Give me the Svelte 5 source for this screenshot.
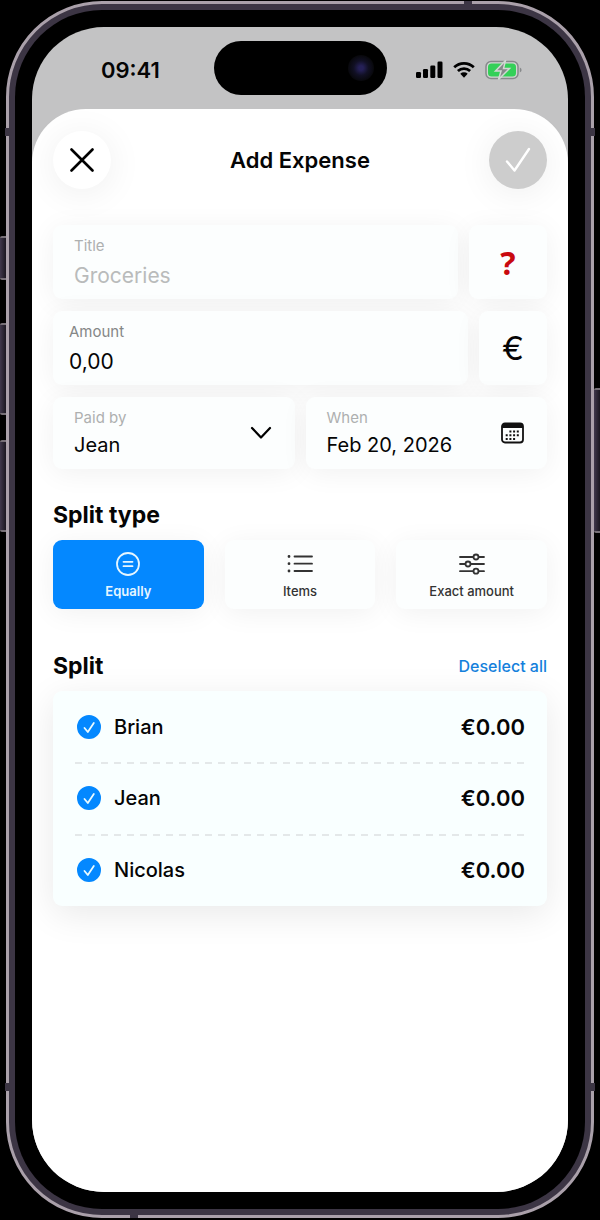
<script lang="ts">
  let title = $state("");
  let amount = $state("0,00");
  let paidBy = $state("Jean");
  let date = $state("Feb 20, 2026");
  let splitType = $state("equally");

  let people = $state([
    { name: "Brian", selected: true },
    { name: "Jean", selected: true },
    { name: "Nicolas", selected: true },
  ]);

  const splitTypes = [
    { id: "equally", label: "Equally" },
    { id: "items", label: "Items" },
    { id: "exact", label: "Exact amount" },
  ];

  let selectedCount = $derived(people.filter((p) => p.selected).length);
  let share = $derived(
    selectedCount ? (parseFloat(amount.replace(",", ".")) || 0) / selectedCount : 0
  );

  function toggleAll() {
    const next = selectedCount === 0;
    people.forEach((p) => (p.selected = next));
  }
</script>

<div class="stage">
  <div class="phone">
    <span class="side action"></span>
    <span class="side vol-up"></span>
    <span class="side vol-down"></span>
    <span class="side power"></span>
    <span class="band top"></span>
    <span class="band bottom"></span>
    <span class="band left upper"></span>
    <span class="band left lower"></span>
    <span class="band right upper"></span>
    <span class="band right lower"></span>

    <div class="bezel">
      <div class="screen">
        <div class="status">
          <span class="time">09:41</span>
          <div class="island"><span class="camera"></span></div>
          <div class="indicators">
            <svg width="27" height="18" viewBox="0 0 27 18">
              <rect x="0" y="11" width="5" height="6" rx="1.3" />
              <rect x="7" y="8" width="5" height="9" rx="1.3" />
              <rect x="14.3" y="4.5" width="5" height="12.5" rx="1.3" />
              <rect x="21.5" y="0.5" width="5" height="16.5" rx="1.3" />
            </svg>
            <svg width="22" height="18" viewBox="0 0 22 18">
              <g fill="none" stroke="#000" stroke-width="2.7">
                <path d="M1.2 6.3a14 14 0 0 1 19.600 0" />
                <path d="M4.900 10a8.800 8.800 0 0 1 12.200 0" />
              </g>
              <path d="M7.300 12.800a5.400 5.400 0 0 1 7.400 0L11 16.800z" />
            </svg>
            <svg width="37" height="20" viewBox="0 0 37 20">
              <rect x="1" y="1.5" width="32" height="17" rx="5" fill="#d2d7d3" stroke="#87898b" stroke-width="1.5" />
              <rect x="3" y="3.5" width="28" height="13" rx="3.5" fill="#34d058" />
              <path d="M34.800 7.500v5q1.800-.8 1.800-2.500t-1.800-2.500z" fill="#87898b" />
              <path d="M20.500 0.500 10.500 11h5.500l-2.500 8.500L24.500 8.500h-6z" fill="#87898b" stroke="#d2d7d3" stroke-width="1.5" />
            </svg>
          </div>
        </div>

        <main class="sheet">
          <header>
            <button class="round close" aria-label="Close">
              <svg width="24" height="24" viewBox="0 0 24 24">
                <path d="M1.500 1.500l21 21M22.500 1.500l-21 21" />
              </svg>
            </button>
            <h1>Add Expense</h1>
            <button class="round confirm" aria-label="Save">
              <svg width="26" height="26" viewBox="0 0 26 26">
                <path d="M2 14.500l7.500 9L24 2" />
              </svg>
            </button>
          </header>

          <form>
            <div class="row">
              <label class="field wide-pad">
                <span>Title</span>
                <input type="text" placeholder="Groceries" bind:value={title} />
              </label>
              <button type="button" class="tile category" aria-label="Category">?</button>
            </div>
            <div class="row">
              <label class="field dark-label">
                <span>Amount</span>
                <input type="text" inputmode="decimal" bind:value={amount} />
              </label>
              <button type="button" class="tile currency" aria-label="Currency">€</button>
            </div>
            <div class="row halves">
              <label class="field wide-pad">
                <span>Paid by</span>
                <select bind:value={paidBy}>
                  {#each people as person}
                    <option>{person.name}</option>
                  {/each}
                </select>
                <svg class="icon" width="22" height="14" viewBox="0 0 22 14">
                  <path d="M2 2l9 9.500L20 2" fill="none" stroke="#000" stroke-width="2.2" stroke-linecap="round" stroke-linejoin="round" />
                </svg>
              </label>
              <label class="field wide-pad">
                <span>When</span>
                <input type="text" bind:value={date} />
                <svg class="icon" width="23" height="22" viewBox="0 0 23 22">
                  <rect x="1" y="1.5" width="21" height="19" rx="3" fill="none" stroke="#111" stroke-width="1.8" />
                  <path d="M1 6V4a3 3 0 0 1 3-3h15a3 3 0 0 1 3 3v2z" fill="#111" />
                  <g fill="none" stroke="#111" stroke-width="2" stroke-dasharray="2 1.7">
                    <path d="M8.400 9.500h10" />
                    <path d="M4.700 13.200h14" />
                    <path d="M4.700 17h10" />
                  </g>
                </svg>
              </label>
            </div>
          </form>

          <h2 class="type-title">Split type</h2>
          <div class="types" role="radiogroup" aria-label="Split type">
            {#each splitTypes as type}
              <label class="type" class:active={splitType === type.id}>
                <input type="radio" name="split-type" value={type.id} bind:group={splitType} />
                <svg width="26" height="26" viewBox="0 0 26 26">
                  {#if type.id === "equally"}
                    <circle cx="13" cy="13" r="11" />
                    <path d="M8.500 10.800h9M8.500 15.200h9" />
                  {:else if type.id === "items"}
                    <path d="M7.500 5.500H25M7.500 12.700H25M7.500 20H25" />
                    <path d="M2 5.500h.01M2 12.700h.01M2 20h.01" stroke-width="2.8" />
                  {:else}
                    <path d="M1 6h13.300M19.700 6H25M1 13h5.300M11.700 13H25M1 20.200h13.300M19.700 20.200H25" />
                    <circle cx="17" cy="6" r="2.5" />
                    <circle cx="9" cy="13" r="2.5" />
                    <circle cx="17" cy="20.2" r="2.5" />
                  {/if}
                </svg>
                <span>{type.label}</span>
              </label>
            {/each}
          </div>

          <div class="split-head">
            <h2>Split</h2>
            <button class="link" onclick={toggleAll}>
              {selectedCount ? "Deselect all" : "Select all"}
            </button>
          </div>
          <ul>
            {#each people as person}
              <li>
                <label>
                  <span class="check">
                    <input type="checkbox" bind:checked={person.selected} />
                    <svg width="24" height="24" viewBox="0 0 24 24">
                      <path d="M7.500 13l3.300 4L16.800 8" />
                    </svg>
                  </span>
                  <span class="name">{person.name}</span>
                </label>
                <strong>€{(person.selected ? share : 0).toFixed(2)}</strong>
              </li>
            {/each}
          </ul>
        </main>
      </div>
    </div>
  </div>
</div>

<style>
  :global(body) {
    background: #000;
  }

  .stage {
    box-sizing: border-box;
    min-height: 100vh;
    padding: 1px 6px 2px;
    display: flex;
    font-family: Inter, "Liberation Sans", sans-serif;
    color: #050505;
  }

  .stage * {
    box-sizing: border-box;
  }

  .phone {
    position: relative;
    flex: 1;
    min-width: 0;
    display: flex;
    border: 3px solid #aaa0aa;
    border-radius: 96px;
    background: #3c3544;
  }

  .bezel {
    flex: 1;
    min-width: 0;
    display: flex;
    margin: 6px;
    padding: 17px;
    border-radius: 87px;
    background: #000;
  }

  .screen {
    flex: 1;
    min-width: 0;
    display: flex;
    flex-direction: column;
    overflow: hidden;
    border-radius: 72px;
    background: #c3c3c4;
  }

  /* hardware buttons and antenna bands */
  .side {
    position: absolute;
    left: -9px;
    width: 6px;
    border-radius: 2px 0 0 2px;
    border-top: 2px solid #777078;
    border-bottom: 2px solid #777078;
    background: linear-gradient(90deg, #40384c, #1b1720);
  }

  .action {
    top: 232px;
    height: 44px;
  }

  .vol-up {
    top: 319px;
    height: 92px;
  }

  .vol-down {
    top: 436px;
    height: 92px;
  }

  .power {
    left: auto;
    right: -9px;
    top: 384px;
    height: 145px;
  }

  .band {
    position: absolute;
    width: 8px;
    height: 8px;
    background: #3c3544;
  }

  .band.top {
    top: -3px;
    right: 119px;
  }

  .band.bottom {
    bottom: -3px;
    left: 121px;
  }

  .band.left {
    left: -4px;
  }

  .band.right {
    right: -4px;
  }

  .band.upper {
    top: 124px;
  }

  .band.lower {
    bottom: 124px;
  }

  .status {
    height: 82px;
    padding: 0 46px;
    display: grid;
    grid-template-columns: 1fr auto 1fr;
    align-items: center;
  }

  .time {
    padding: 4px 0 0 23px;
    font-size: 22px;
    font-weight: 600;
  }

  .island {
    width: 173px;
    height: 54px;
    padding-right: 13px;
    display: flex;
    align-items: center;
    justify-content: flex-end;
    border-radius: 27px;
    background: #000;
  }

  .camera {
    width: 26px;
    height: 26px;
    border-radius: 50%;
    background: radial-gradient(circle, #252057 0 12%, #111024 40%, #08080c 70%);
  }

  .indicators {
    padding-top: 4px;
    display: flex;
    align-items: center;
    justify-content: flex-end;
    gap: 10px;
  }

  .sheet {
    flex: 1;
    padding: 22px 21px 40px;
    border-radius: 54px 54px 0 0;
    background: #fff;
  }

  header {
    display: flex;
    align-items: center;
    justify-content: space-between;
  }

  h1,
  h2 {
    margin: 0;
    font-weight: 600;
  }

  h1 {
    font-size: 22px;
    line-height: 28px;
  }

  h2 {
    font-size: 23px;
    font-weight: 700;
    line-height: 28px;
  }

  button,
  input,
  select {
    margin: 0;
    padding: 0;
    border: 0;
    background: none;
    font-family: inherit;
    color: inherit;
  }

  .round {
    width: 58px;
    height: 58px;
    display: flex;
    align-items: center;
    justify-content: center;
    border-radius: 50%;
    background: #fff;
    box-shadow: 0 4px 36px rgba(0, 0, 0, 0.07);
  }

  .round path {
    fill: none;
    stroke: #000;
    stroke-width: 2.6;
    stroke-linecap: round;
    stroke-linejoin: round;
  }

  .round.confirm {
    background: #cdcdcd;
  }

  .confirm path {
    stroke: #fff;
    stroke-width: 2.4;
  }

  form {
    margin-top: 36px;
    display: flex;
    flex-direction: column;
    gap: 12px;
  }

  .row {
    display: flex;
    gap: 11px;
  }

  .field,
  .tile,
  .type,
  ul {
    border-radius: 9px;
    background: #fcfefe;
    box-shadow: 0 4px 28px rgba(0, 0, 0, 0.06);
  }

  .field {
    flex: 1;
    min-width: 0;
    height: 74px;
    padding: 8px 16px;
    display: grid;
    grid-template-columns: 1fr;
    grid-template-rows: 24px 36px;
    align-items: center;
  }

  .field.wide-pad {
    padding: 8px 23px 8px 21px;
  }

  .halves .field {
    height: 72px;
    grid-template-rows: 24px 32px;
  }

  .field span {
    grid-row: 1;
    grid-column: 1;
    font-size: 15px;
    color: #aeb0b0;
  }

  .field.dark-label span {
    color: #858787;
  }

  .field input,
  .field select {
    grid-row: 2;
    grid-column: 1;
    width: 100%;
    height: 32px;
    font-size: 21px;
    outline: none;
    appearance: none;
  }

  .halves input,
  .halves select {
    font-size: 20px;
  }

  .field input::placeholder {
    color: #b9bbbb;
    opacity: 1;
  }

  .icon {
    grid-row: 1 / 3;
    grid-column: 1;
    justify-self: end;
    pointer-events: none;
  }

  .tile {
    width: 68px;
    font-size: 33px;
    font-weight: 400;
  }

  .tile.category {
    width: 78px;
    font-family: "Noto Sans", "Open Sans", sans-serif;
    font-size: 32px;
    font-weight: 700;
    color: #c9090f;
  }

  .type-title {
    margin-top: 32px;
  }

  .types {
    margin-top: 11px;
    display: grid;
    grid-template-columns: repeat(3, 1fr);
    gap: 21px;
  }

  .type {
    position: relative;
    height: 69px;
    padding-top: 11px;
    display: flex;
    flex-direction: column;
    align-items: center;
    gap: 4px;
    font-size: 13px;
    font-weight: 500;
    line-height: 20px;
    color: #333;
    cursor: pointer;
  }

  .type input {
    position: absolute;
    opacity: 0;
  }

  .type svg {
    fill: none;
    stroke: #333;
    stroke-width: 1.8;
    stroke-linecap: round;
  }

  .type.active {
    background: #0488ff;
    color: #e6f6ff;
    font-weight: 600;
  }

  .type.active svg {
    stroke: #e6f6ff;
  }

  .split-head {
    margin: 43px 0 11px;
    display: flex;
    align-items: center;
    justify-content: space-between;
  }

  .link {
    font-size: 16px;
    font-weight: 500;
    color: #1480dc;
    cursor: pointer;
  }

  ul {
    margin: 0;
    padding: 0 22px;
    list-style: none;
    background: #f9ffff;
    box-shadow: 0 8px 36px rgba(0, 0, 0, 0.09);
  }

  li {
    height: 71px;
    display: flex;
    align-items: center;
    justify-content: space-between;
  }

  li + li {
    height: 72px;
    background: repeating-linear-gradient(90deg, #e4e8e9 0 7px, transparent 7px 13px) top / 100% 2px no-repeat;
  }

  li label {
    padding-left: 2px;
    display: flex;
    align-items: center;
    gap: 13px;
    font-size: 20px;
    font-weight: 500;
  }

  li strong {
    font-size: 22px;
    font-weight: 600;
  }

  .check {
    display: grid;
  }

  .check input,
  .check svg {
    grid-area: 1 / 1;
    width: 24px;
    height: 24px;
  }

  .check input {
    appearance: none;
    border: 2px solid #0488ff;
    border-radius: 50%;
  }

  .check input:checked {
    background: #0488ff;
  }

  .check svg {
    pointer-events: none;
    fill: none;
    stroke: #e9faff;
    stroke-width: 1.8;
    stroke-linecap: round;
    stroke-linejoin: round;
  }
</style>
